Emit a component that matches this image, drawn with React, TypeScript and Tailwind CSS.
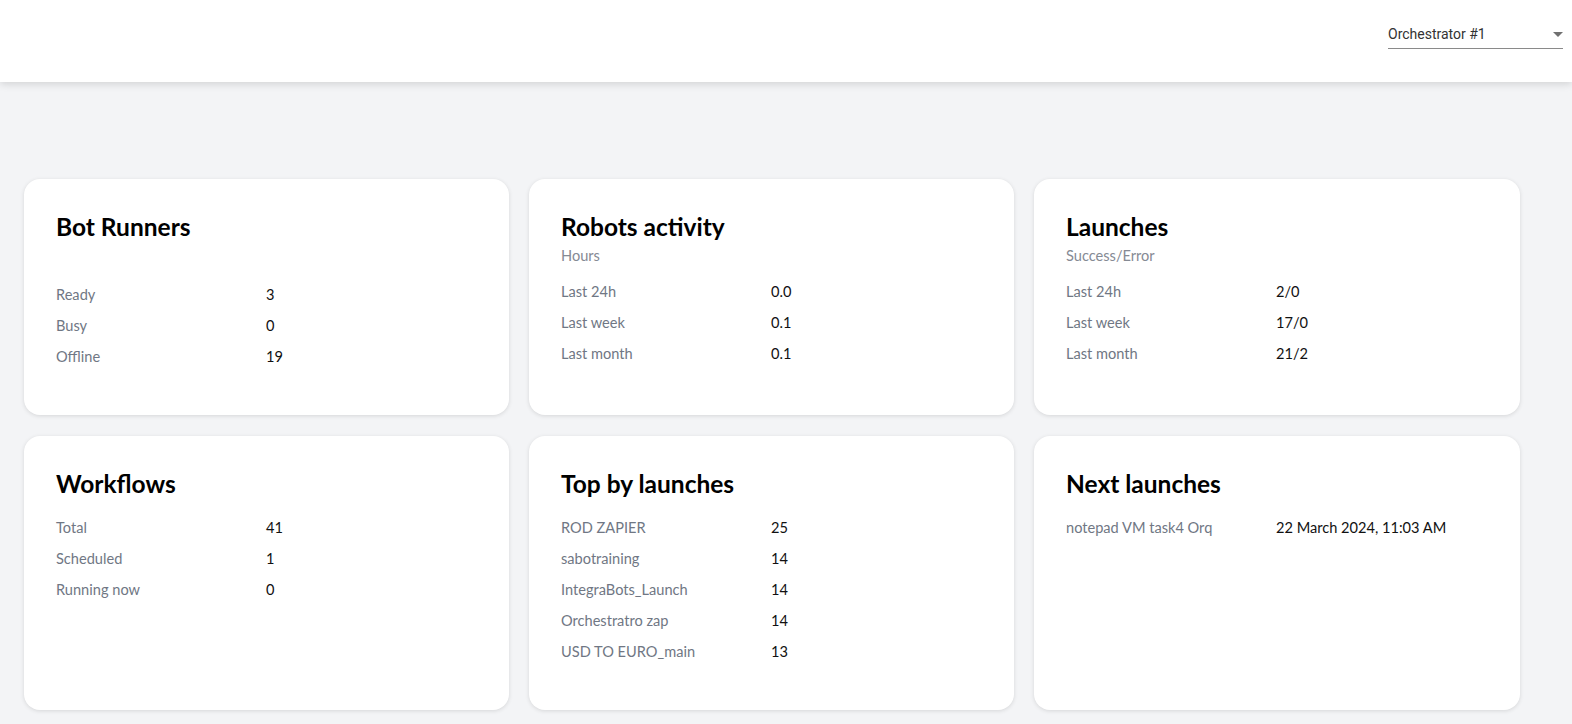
import React from 'react';

type Row = [string, string];

const Card = ({ title, subtitle, rows, gap }: { title: string; subtitle?: string; rows: Row[]; gap: string }) => {
  return (
    <div className="bg-white rounded-2xl shadow-[0_1px_4px_rgba(0,0,0,0.12)] px-8 pt-[30px]">
      <h2 className="text-[24.5px] leading-9 font-bold text-black">{title}</h2>
      {subtitle !== undefined && (
        <div className="text-[14.6px] leading-5 text-[#858a94] h-5 mt-[1px]">{subtitle}</div>
      )}
      <div className={gap}>
        {rows.map(([label, value]) => (
          <div key={label} className="flex h-[31px] items-center text-[14.6px]">
            <div className="w-[210px] text-[#707784]">{label}</div>
            <div className="text-[#111]">{value}</div>
          </div>
        ))}
      </div>
    </div>
  );
};

const App = () => {
  return (
    <div className="min-h-[724px] bg-[#f3f4f6]" style={{ fontFamily: 'Lato, "Noto Sans", sans-serif' }}>
      <header className="h-[82px] bg-white shadow-[0_2px_8px_rgba(0,0,0,0.14)] flex justify-end relative z-10">
        <div className="mr-[9px] mt-[24px] w-[175px] h-[25px] border-b border-[#8a8a8a] flex items-start justify-between" style={{ fontFamily: 'Roboto, sans-serif' }}>
          <span className="text-[14px] leading-5 text-[#333]">Orchestrator #1</span>
          <svg width="10" height="5" viewBox="0 0 10 5" className="mt-[8px]"><path d="M0 0h10L5 5z" fill="#707070" /></svg>
        </div>
      </header>
      <main className="pl-6 pt-[97px] pb-[14px]">
        <div className="grid grid-cols-[485px_485px_486px] gap-x-5 gap-y-[21px]">
          <div className="h-[236px] grid">
            <Card title="Bot Runners" subtitle="" rows={[['Ready', '3'], ['Busy', '0'], ['Offline', '19']]} gap="mt-[13px]" />
          </div>
          <div className="h-[236px] grid">
            <Card title="Robots activity" subtitle="Hours" rows={[['Last 24h', '0.0'], ['Last week', '0.1'], ['Last month', '0.1']]} gap="mt-[10px]" />
          </div>
          <div className="h-[236px] grid">
            <Card title="Launches" subtitle="Success/Error" rows={[['Last 24h', '2/0'], ['Last week', '17/0'], ['Last month', '21/2']]} gap="mt-[10px]" />
          </div>
          <div className="h-[274px] grid">
            <Card title="Workflows" rows={[['Total', '41'], ['Scheduled', '1'], ['Running now', '0']]} gap="mt-[10px]" />
          </div>
          <div className="h-[274px] grid">
            <Card
              title="Top by launches"
              rows={[
                ['ROD ZAPIER', '25'],
                ['sabotraining', '14'],
                ['IntegraBots_Launch', '14'],
                ['Orchestratro zap', '14'],
                ['USD TO EURO_main', '13'],
              ]}
              gap="mt-[10px]"
            />
          </div>
          <div className="h-[274px] grid">
            <Card title="Next launches" rows={[['notepad VM task4 Orq', '22 March 2024, 11:03 AM']]} gap="mt-[10px]" />
          </div>
        </div>
      </main>
    </div>
  );
};

export default App;
